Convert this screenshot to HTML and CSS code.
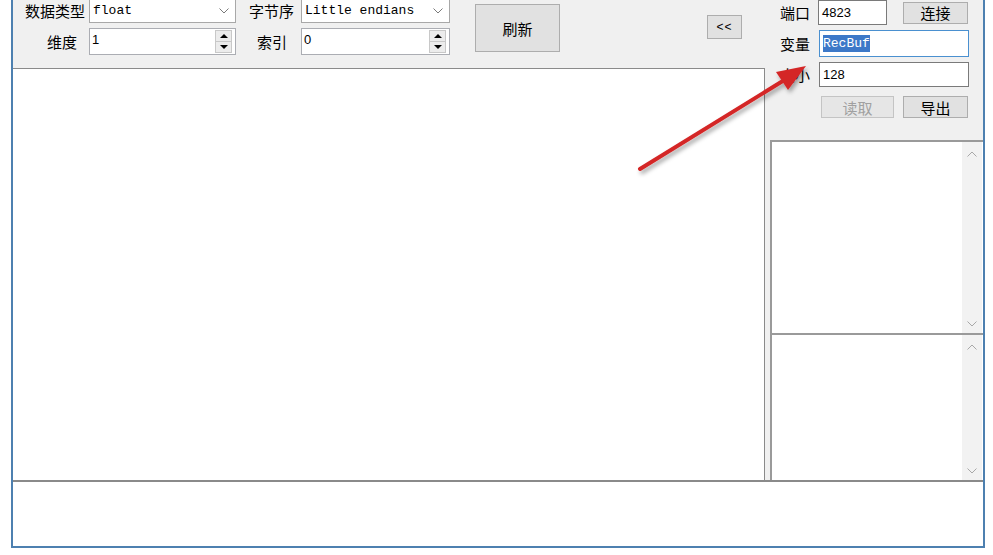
FILE: index.html
```html
<!DOCTYPE html>
<html>
<head>
    <meta charset="utf-8">
    <title>变量监视</title>
    <link rel="stylesheet" href="styles.css">
</head>
<body>
<div class="window">
    <div class="main">
        <div class="left">
            <div class="toolbar">
                <label class="lbl lbl-type">数据类型</label>
                <div class="combo combo-type">
                    <span class="mono">float</span>
                    <svg class="chev" width="10" height="6" viewBox="0 0 10 6"><polyline points="0.5,0.5 5,5 9.5,0.5" fill="none" stroke="#7a7a7a" stroke-width="1"/></svg>
                </div>
                <label class="lbl lbl-order">字节序</label>
                <div class="combo combo-order">
                    <span class="mono">Little endians</span>
                    <svg class="chev" width="10" height="6" viewBox="0 0 10 6"><polyline points="0.5,0.5 5,5 9.5,0.5" fill="none" stroke="#7a7a7a" stroke-width="1"/></svg>
                </div>
                <button class="btn btn-refresh">刷新</button>
                <button class="btn btn-collapse">&lt;&lt;</button>

                <label class="lbl lbl-dim">维度</label>
                <div class="spin spin-dim">
                    <span class="num">1</span>
                    <div class="spin-btns">
                        <div class="spin-half"><span class="tri tri-up"></span></div>
                        <div class="spin-half"><span class="tri tri-down"></span></div>
                    </div>
                </div>
                <label class="lbl lbl-index">索引</label>
                <div class="spin spin-index">
                    <span class="num">0</span>
                    <div class="spin-btns">
                        <div class="spin-half"><span class="tri tri-up"></span></div>
                        <div class="spin-half"><span class="tri tri-down"></span></div>
                    </div>
                </div>
            </div>
            <div class="plot"></div>
        </div>

        <div class="side">
            <div class="conn">
                <div class="row row-port">
                    <span class="lbl">端口</span>
                    <div class="field field-port num">4823</div>
                    <button class="btn btn-connect">连接</button>
                </div>
                <div class="row row-var">
                    <span class="lbl">变量</span>
                    <div class="field field-wide focus"><span class="sel mono">RecBuf</span></div>
                </div>
                <div class="row row-size">
                    <span class="lbl">大小</span>
                    <div class="field field-wide num">128</div>
                </div>
                <div class="row row-actions">
                    <button class="btn btn-read" disabled>读取</button>
                    <button class="btn btn-export">导出</button>
                </div>
            </div>
            <div class="lists">
                <div class="list list-top">
                    <div class="list-body"></div>
                    <div class="scroll">
                        <svg width="10" height="6" viewBox="0 0 10 6"><polyline points="0.5,5.5 5,1 9.5,5.5" fill="none" stroke="#a8a8a8"/></svg>
                        <svg width="10" height="6" viewBox="0 0 10 6"><polyline points="0.5,0.5 5,5 9.5,0.5" fill="none" stroke="#a8a8a8"/></svg>
                    </div>
                </div>
                <div class="list list-bottom">
                    <div class="list-body"></div>
                    <div class="scroll">
                        <svg width="10" height="6" viewBox="0 0 10 6"><polyline points="0.5,5.5 5,1 9.5,5.5" fill="none" stroke="#a8a8a8"/></svg>
                        <svg width="10" height="6" viewBox="0 0 10 6"><polyline points="0.5,0.5 5,5 9.5,0.5" fill="none" stroke="#a8a8a8"/></svg>
                    </div>
                </div>
            </div>
        </div>
    </div>
    <div class="console"></div>
</div>

<svg class="arrow" width="993" height="555" viewBox="0 0 993 555">
    <defs>
        <filter id="shade" x="-20%" y="-20%" width="140%" height="140%">
            <feDropShadow dx="2" dy="3" stdDeviation="2" flood-color="#000" flood-opacity="0.35"/>
        </filter>
    </defs>
    <g filter="url(#shade)">
        <line x1="640" y1="169" x2="786" y2="79" stroke="#d42626" stroke-width="4" stroke-linecap="round"/>
        <polygon points="806,66 788,90 776,72" fill="#d42626"/>
    </g>
</svg>
</body>
</html>
```

FILE: styles.css
```css
body {
margin: 0;
background: #fff;
overflow: hidden;
font-family: "Noto Sans CJK SC", sans-serif;
font-size: 15px;
color: #000;
}

.window {
position: relative;
box-sizing: border-box;
margin-left: 11px;
width: 974px;
height: 548px;
background: #f0f0f0;
border-left: 2px solid #4d80b0;
border-right: 2px solid #4d80b0;
border-bottom: 2px solid #4d80b0;
display: flex;
flex-direction: column;
}

.main {
display: flex;
height: 480px;
}

.left {
width: 752px;
display: flex;
flex-direction: column;
}

.toolbar {
height: 68px;
display: grid;
grid-template-columns: 76px 147px 65px 149px 25px 85px 147px 35px;
grid-template-rows: 23px 25px;
row-gap: 7px;
align-content: start;
}

.toolbar > * {
margin-top: -2px;
}

.lbl {
display: flex;
align-items: center;
justify-content: flex-end;
white-space: nowrap;
line-height: 1;
}

.lbl-type { grid-column: 1; grid-row: 1; padding-right: 4px; }
.lbl-order { grid-column: 3; grid-row: 1; padding-right: 7px; }
.lbl-dim { grid-column: 1; grid-row: 2; padding-right: 12px; }
.lbl-index { grid-column: 3; grid-row: 2; padding-right: 14px; }

.mono {
font-family: "Liberation Mono", monospace;
font-size: 13px;
}

.num {
font-family: "Liberation Sans", sans-serif;
font-size: 13px;
}

.combo {
box-sizing: border-box;
background: #fff;
border: 1px solid #a8a8a8;
display: flex;
align-items: center;
justify-content: space-between;
padding: 0 6px 0 3px;
}

.combo-type { grid-column: 2; grid-row: 1; }
.combo-order { grid-column: 4; grid-row: 1; }

.spin {
box-sizing: border-box;
background: #fff;
border: 1px solid #abadb3;
display: flex;
justify-content: space-between;
padding: 1px 3px 1px 2px;
}

.spin .num {
padding-top: 2px;
}

.spin-dim { grid-column: 2; grid-row: 2; }
.spin-index { grid-column: 4; grid-row: 2; }

.spin-btns {
width: 15px;
display: flex;
flex-direction: column;
border: 1px solid #c8c8c8;
background: #ececec;
}

.spin-half {
flex: 1;
display: flex;
align-items: center;
justify-content: center;
}

.spin-half + .spin-half {
border-top: 1px solid #c8c8c8;
}

.tri {
width: 0;
height: 0;
border-left: 4px solid transparent;
border-right: 4px solid transparent;
}

.tri-up { border-bottom: 4px solid #000; }
.tri-down { border-top: 4px solid #000; }

.btn {
box-sizing: border-box;
background: #e1e1e1;
border: 1px solid #adadad;
font-family: "Noto Sans CJK SC", sans-serif;
font-size: 15px;
color: #000;
padding: 0;
line-height: 1;
}

.btn-refresh {
grid-column: 6;
grid-row: 1 / span 2;
align-self: start;
margin-top: 4px;
height: 48px;
}

.btn-collapse {
grid-column: 8;
grid-row: 1 / span 2;
align-self: start;
margin-top: 15px;
height: 24px;
font-family: "Liberation Sans", sans-serif;
font-size: 12px;
letter-spacing: 1px;
}

.plot {
flex: 1;
background: #fff;
border-top: 1px solid #8a8a8a;
border-right: 1px solid #8a8a8a;
}

.side {
flex: 1;
display: flex;
flex-direction: column;
}

.conn {
height: 140px;
padding-left: 15px;
display: flex;
flex-direction: column;
}

.row {
display: flex;
align-items: center;
}

.row .lbl {
width: 38px;
justify-content: flex-start;
}

.field {
box-sizing: border-box;
background: #fff;
border: 1px solid #7a7a7a;
display: flex;
align-items: center;
padding-left: 3px;
}

.row-port { height: 25px; }
.row-var { height: 27px; margin-top: 5px; }
.row-size { height: 25px; margin-top: 5px; }
.row-actions { height: 22px; margin-top: 9px; }

.field-port {
width: 69px;
height: 25px;
}

.field-wide {
width: 150px;
height: 100%;
margin-left: 1px;
}

.focus {
border-color: #4a90d0;
}

.sel {
background: #3c78c8;
color: #fff;
padding: 1px 0;
}

.btn-connect {
width: 65px;
height: 22px;
margin-left: 16px;
}

.btn-read {
width: 73px;
height: 22px;
margin-left: 41px;
color: #a0a0a0;
border-color: #c4c4c4;
background: #e6e6e6;
}

.btn-export {
width: 65px;
height: 22px;
margin-left: 9px;
}

.lists {
flex: 1;
margin-left: 5px;
display: flex;
flex-direction: column;
}

.list {
display: flex;
background: #fff;
border-top: 2px solid #9a9a9a;
border-left: 2px solid #9a9a9a;
}

.list-top { height: 193px; box-sizing: border-box; }
.list-bottom { flex: 1; }

.list-body {
flex: 1;
}

.scroll {
width: 20px;
margin-right: 1px;
background: #f2f2f2;
display: flex;
flex-direction: column;
justify-content: space-between;
align-items: center;
padding: 9px 0 6px;
}

.console {
flex: 1;
background: #fff;
border-top: 2px solid #8a8a8a;
}

.arrow {
position: absolute;
left: 0;
top: 0;
pointer-events: none;
}
```
